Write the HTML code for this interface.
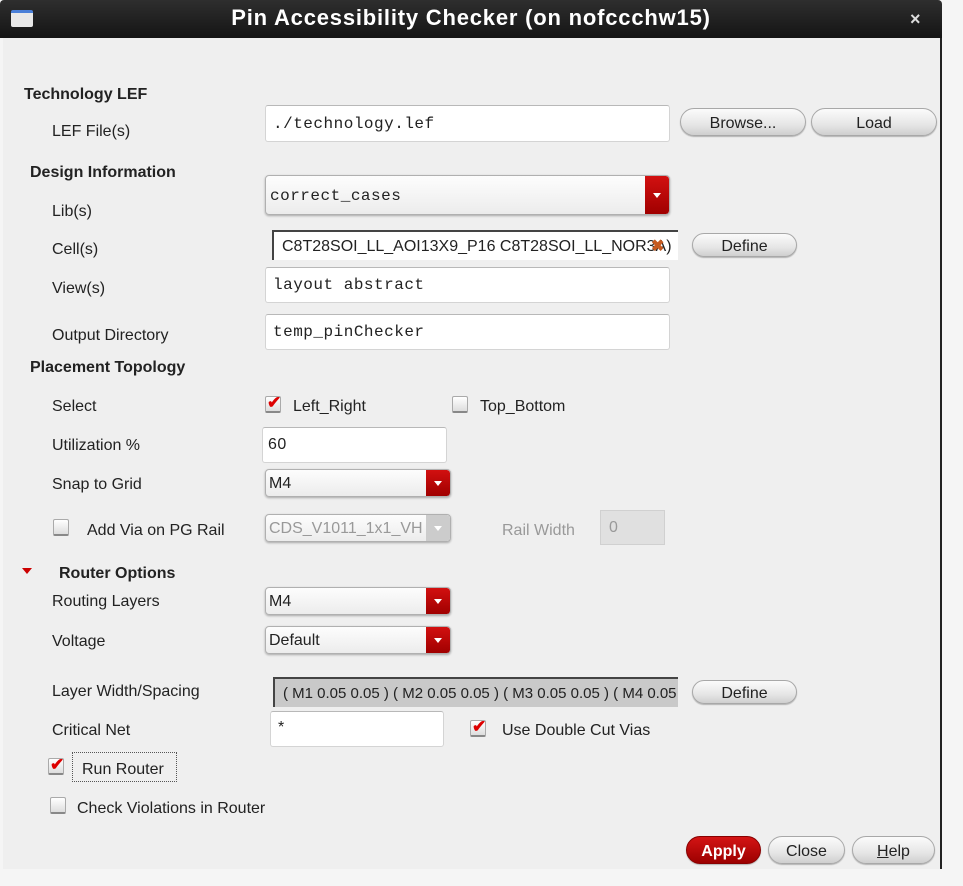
<!DOCTYPE html>
<html><head><meta charset="utf-8"><style>
*{box-sizing:border-box;margin:0;padding:0}
body{width:963px;height:886px;background:#f5f5f5;position:relative;overflow:hidden;font-family:"Liberation Sans",sans-serif;font-size:16px;color:#222}
.a{position:absolute}
.title{left:0;top:0;width:942px;height:38px;background:linear-gradient(#2e2e2e,#151515);border-radius:4px 4px 0 0}
.win{left:3px;top:38px;width:939px;height:831px;background:#efefef;border-right:2px solid #222}
.lbl{line-height:20px;white-space:nowrap;margin-top:2px}
.b{font-weight:bold}
.fld{background:#fff;border:1px solid #d4d4d4;border-top-color:#b8b8b8;border-radius:3px;font-family:"Liberation Mono",monospace;font-size:16px;padding-left:7px;display:flex;align-items:center;letter-spacing:0.5px}
.btn{background:linear-gradient(#fbfbfb,#e6e6e6 60%,#cfcfcf);border:1px solid #a8a8a8;border-radius:14px;text-align:center;font-size:16px;display:flex;align-items:center;justify-content:center;box-shadow:0 1px 1px rgba(0,0,0,.25);padding-top:3px}
.cmb{background:linear-gradient(#fdfdfd,#ececec);border:1px solid #b0b0b0;border-radius:4px;padding-left:3px;padding-top:2px;display:flex;align-items:center;font-size:16px;box-shadow:0 1px 2px rgba(0,0,0,.3);overflow:hidden}
.dd{position:absolute;right:0;top:0;bottom:0;width:24px;background:linear-gradient(#d21010,#a00000);border-radius:0 3px 3px 0}
.dd:after{content:"";position:absolute;left:8px;top:50%;margin-top:-2px;border-left:4px solid transparent;border-right:4px solid transparent;border-top:5px solid #fff}
.cb{width:16px;height:17px;background:linear-gradient(#fff,#ddd);border:1px solid #aaa;border-bottom:2px solid #888;border-radius:2px}
.ck{color:#d00;font-size:17px;font-weight:bold;line-height:14px;position:absolute;left:1px;top:-1px}
</style></head><body>
<div class="a title"></div>
<div class="a" style="left:11px;top:10px;width:22px;height:17px;background:#e8e8e8;border-top:3px solid #4a7fd8;border-radius:2px"></div>
<div class="a b" style="left:0;width:942px;top:5px;text-align:center;color:#fff;font-size:22px;letter-spacing:0.8px">Pin Accessibility Checker (on nofccchw15)</div>
<div class="a b" style="left:910px;top:9px;color:#ddd;font-size:18px">×</div>
<div class="a win"></div>

<div class="a lbl b" style="left:24px;top:83px">Technology LEF</div>
<div class="a lbl" style="left:52px;top:120px">LEF File(s)</div>
<div class="a fld" style="left:265px;top:105px;width:405px;height:37px">./technology.lef</div>
<div class="a btn" style="left:680px;top:108px;width:126px;height:28px">Browse...</div>
<div class="a btn" style="left:811px;top:108px;width:126px;height:28px">Load</div>

<div class="a lbl b" style="left:30px;top:161px">Design Information</div>
<div class="a lbl" style="left:52px;top:200px">Lib(s)</div>
<div class="a cmb fld" style="left:265px;top:175px;width:405px;height:40px;padding-left:4px">correct_cases<div class="dd"></div></div>
<div class="a lbl" style="left:52px;top:238px">Cell(s)</div>
<div class="a" style="left:272px;top:230px;width:406px;height:30px;background:#fff;border-top:2px solid #444;border-left:2px solid #444;padding-left:8px;line-height:30px;font-size:16px;white-space:nowrap;overflow:hidden">C8T28SOI_LL_AOI13X9_P16 C8T28SOI_LL_NOR3A)<span class="a" style="left:377px;top:0;color:#c55a20;font-weight:bold">✖</span></div>
<div class="a btn" style="left:692px;top:233px;width:105px;height:24px">Define</div>
<div class="a lbl" style="left:52px;top:277px">View(s)</div>
<div class="a fld" style="left:265px;top:267px;width:405px;height:36px">layout abstract</div>
<div class="a lbl" style="left:52px;top:324px">Output Directory</div>
<div class="a fld" style="left:265px;top:314px;width:405px;height:36px">temp_pinChecker</div>

<div class="a lbl b" style="left:30px;top:356px">Placement Topology</div>
<div class="a lbl" style="left:52px;top:395px">Select</div>
<div class="a cb" style="left:265px;top:396px"><span class="ck">✔</span></div>
<div class="a lbl" style="left:293px;top:395px">Left_Right</div>
<div class="a cb" style="left:452px;top:396px"></div>
<div class="a lbl" style="left:480px;top:395px">Top_Bottom</div>
<div class="a lbl" style="left:52px;top:434px">Utilization %</div>
<div class="a fld" style="left:262px;top:427px;width:185px;height:36px;font-family:'Liberation Sans',sans-serif;padding-left:5px">60</div>
<div class="a lbl" style="left:52px;top:473px">Snap to Grid</div>
<div class="a cmb" style="left:265px;top:469px;width:186px;height:28px">M4<div class="dd"></div></div>
<div class="a cb" style="left:53px;top:519px"></div>
<div class="a lbl" style="left:87px;top:519px">Add Via on PG Rail</div>
<div class="a cmb" style="left:265px;top:514px;width:186px;height:28px;color:#999">CDS_V1011_1x1_VH<div class="dd" style="background:#ccc"></div></div>
<div class="a lbl" style="left:502px;top:519px;color:#999">Rail Width</div>
<div class="a" style="left:600px;top:510px;width:65px;height:35px;background:#e0e0e0;border:1px solid #d0d0d0;color:#999;padding:8px 0 0 8px">0</div>

<div class="a" style="left:22px;top:568px;border-left:5px solid transparent;border-right:5px solid transparent;border-top:6px solid #c00"></div>
<div class="a lbl b" style="left:59px;top:562px">Router Options</div>
<div class="a lbl" style="left:52px;top:590px">Routing Layers</div>
<div class="a cmb" style="left:265px;top:587px;width:186px;height:28px">M4<div class="dd"></div></div>
<div class="a lbl" style="left:52px;top:630px">Voltage</div>
<div class="a cmb" style="left:265px;top:626px;width:186px;height:28px">Default<div class="dd"></div></div>

<div class="a lbl" style="left:52px;top:680px">Layer Width/Spacing</div>
<div class="a" style="left:273px;top:677px;width:405px;height:30px;background:#c9c9c9;border-top:2px solid #444;border-left:2px solid #444;padding-left:8px;line-height:30px;white-space:nowrap;overflow:hidden;font-size:15px">( M1 0.05 0.05 ) ( M2 0.05 0.05 ) ( M3 0.05 0.05 ) ( M4 0.05 0.05 )</div>
<div class="a btn" style="left:692px;top:680px;width:105px;height:24px">Define</div>
<div class="a lbl" style="left:52px;top:719px">Critical Net</div>
<div class="a fld" style="left:270px;top:711px;width:174px;height:36px;font-family:'Liberation Sans',sans-serif;align-items:flex-start;padding-top:7px">*</div>
<div class="a cb" style="left:470px;top:720px"><span class="ck">✔</span></div>
<div class="a lbl" style="left:502px;top:719px">Use Double Cut Vias</div>

<div class="a cb" style="left:48px;top:758px"><span class="ck">✔</span></div>
<div class="a" style="left:72px;top:752px;width:105px;height:30px;border:1px dotted #555"></div>
<div class="a lbl" style="left:82px;top:758px">Run Router</div>
<div class="a cb" style="left:50px;top:797px"></div>
<div class="a lbl" style="left:77px;top:797px">Check Violations in Router</div>

<div class="a btn" style="left:686px;top:836px;width:75px;height:28px;background:linear-gradient(#d41414,#9c0000);border-color:#800;color:#fff;font-weight:bold">Apply</div>
<div class="a btn" style="left:768px;top:836px;width:77px;height:28px">Close</div>
<div class="a btn" style="left:852px;top:836px;width:83px;height:28px"><u>H</u>elp</div>
</body></html>
